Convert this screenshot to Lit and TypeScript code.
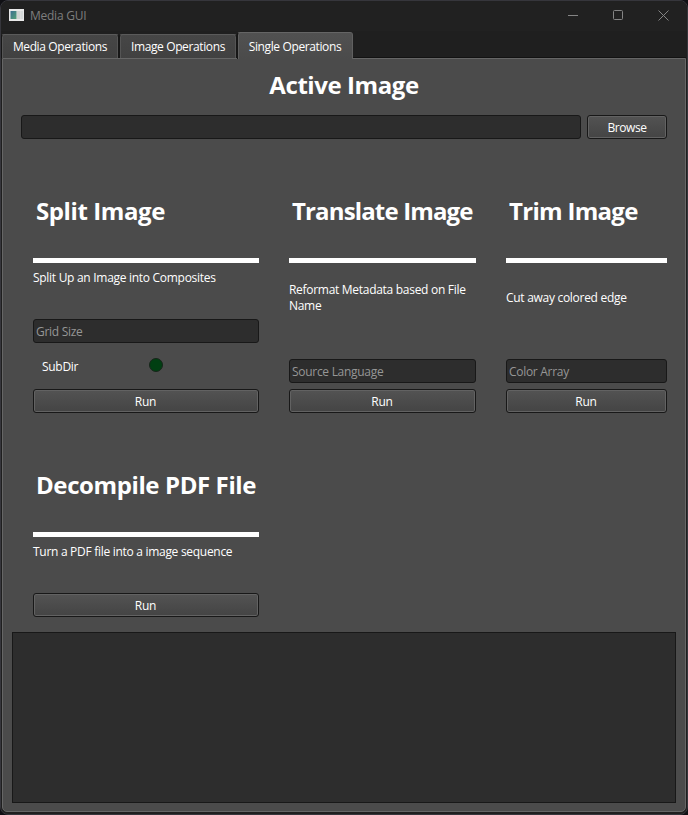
import { LitElement, html, css, nothing } from "lit";
import { customElement, property } from "lit/decorators.js";

@customElement("operation-card")
class OperationCard extends LitElement {
  @property() heading = "";
  @property() description = "";
  @property() field = "";
  @property() toggle = "";

  static styles = css`
    :host { display: flex; flex-direction: column; min-width: 0; }
    * { box-sizing: border-box; }
    h2 {
      margin: 0; padding-left: 3px; height: 92px;
      font: 700 24px/89px "Open Sans", "Noto Sans", sans-serif;
      letter-spacing: var(--heading-spacing, -0.4px); white-space: nowrap;
    }
    .rule { height: 5px; background: #fff; flex: none; }
    .description { flex: 1; display: flex; align-items: center; line-height: 16px; min-height: 0; padding-bottom: 26px; }
    .field {
      height: 24px; flex: none; margin-bottom: 6px; padding-left: 2px;
      border: 1px solid #181818; border-radius: 3px; background: #2d2d2d;
      color: #969696; line-height: 23px;
    }
    .toggle { height: 46px; flex: none; display: flex; padding-left: 9px; line-height: 47px; }
    .toggle span { width: 107px; }
    .led { width: 14px; height: 14px; margin-top: 15px; border-radius: 50%; background: #003f12; border: 1px solid #17251a; }
    .button {
      height: 24px; flex: none; border: 1px solid #181818; border-radius: 3px;
      background: linear-gradient(#535353, #444); box-shadow: inset 0 0 0 1px #626262;
      text-align: center; line-height: 23px; padding-right: 1px;
    }
    .with-toggle { margin-bottom: 0; }
  `;

  render() {
    return html`
      <h2>${this.heading}</h2>
      <div class="rule"></div>
      <div class="description"><span>${this.description}</span></div>
      ${this.field ? html`<div class="field ${this.toggle ? "with-toggle" : ""}">${this.field}</div>` : nothing}
      ${this.toggle ? html`<div class="toggle"><span>${this.toggle}</span><i class="led"></i></div>` : nothing}
      <div class="button">Run</div>
    `;
  }
}

@customElement("app-root")
class AppRoot extends LitElement {
  static styles = css`
    :host {
      display: block; width: 688px; height: 815px; background: #101014; color: #fff;
      font: 12px/16px "Open Sans", "Noto Sans", sans-serif; letter-spacing: -0.29px; overflow: hidden;
    }
    * { box-sizing: border-box; }
    .window {
      height: 815px; display: flex; flex-direction: column; padding: 0 1px 2px;
      border: 1px solid #36363c; border-radius: 8px; background: #1f1f1f;
    }
    .titlebar { height: 30px; flex: none; display: flex; align-items: center; background: #212121; margin: 0 -1px; padding-left: 8px; border-radius: 7px 7px 0 0; color: #7e7e7e; }
    .titlebar .icon { width: 15px; height: 12px; margin: -2px 6px 0 0; }
    .titlebar .name { flex: 1; letter-spacing: -0.25px; }
    .controls { display: flex; gap: 34px; padding: 0 18px 1px 0; }
    .controls svg { width: 11px; height: 11px; fill: none; stroke: #858585; }
    .tabs { height: 28px; flex: none; display: flex; align-items: flex-end; margin-left: -1px; position: relative; z-index: 1; }
    .tab {
      width: 118px; height: 24px; margin-bottom: 1px; text-align: center; line-height: 24px; letter-spacing: -0.38px;
      background: linear-gradient(#464646, #414141); border: 1px solid #171717; border-top-color: #5a5a5a; border-bottom: 0;
      box-shadow: inset 1px 0 #555, inset -1px 0 #555; border-radius: 3px 3px 0 0;
    }
    .tab:first-child { width: 118px; }
    .tab.active { width: 116px; height: 27px; margin-bottom: 0; line-height: 27px; background: linear-gradient(#515151, #4b4b4b); border-top-color: #656565; border-right-color: #606060; box-shadow: inset 1px 0 #606060; }
    .pane {
      flex: 1; min-height: 0; display: flex; flex-direction: column; margin-top: -1px;
      border: 1px solid #666; border-radius: 0 0 5px 5px; box-shadow: 0 -1px #121212; background: #4b4b4b; padding: 0 9px 8px;
    }
    h1 { margin: 0; height: 56px; text-align: center; font: 700 24px/52px "Open Sans", "Noto Sans", sans-serif; letter-spacing: -0.43px; }
    .picker { display: flex; gap: 6px; height: 24px; flex: none; margin: 0 9px; }
    .path { flex: 1; border: 1px solid #181818; border-radius: 3px; background: #2d2d2d; }
    .browse {
      width: 80px; border: 1px solid #181818; border-radius: 3px; text-align: center; line-height: 23px; letter-spacing: -0.45px;
      background: linear-gradient(#535353, #444); box-shadow: inset 0 0 0 1px #626262;
    }
    .cards {
      display: grid; grid-template-columns: 226px 187px 161px; grid-template-rows: 247px 177px;
      gap: 27px 30px; margin: 27px 0 0 21px;
    }
    .translate { --heading-spacing: -0.85px; }
    .trim { --heading-spacing: -0.7px; }
    .log { flex: 1; margin-top: 15px; border: 1px solid #181818; background: #2d2d2d; }
  `;

  render() {
    return html`
      <div class="window">
        <div class="titlebar">
          <svg class="icon" viewBox="0 0 15 12">
            <defs><linearGradient id="screen" x2="1" y2="1"><stop stop-color="#3c6f91" /><stop offset="1" stop-color="#55a077" /></linearGradient></defs>
            <rect width="15" height="12" fill="#e9e9e9" />
            <rect x="1.5" y="2" width="6" height="8" fill="url(#screen)" />
            <rect x="8" y="2" width="3.5" height="8" fill="#d1d3d3" />
            <rect x="12.5" y="2" width="1" height="8" fill="#c4cccc" />
          </svg>
          <span class="name">Media GUI</span>
          <div class="controls">
            <svg viewBox="0 0 11 11"><path d="M0 5.5h10" /></svg>
            <svg viewBox="0 0 11 11"><rect x=".5" y=".5" width="9" height="9" rx="1" /></svg>
            <svg viewBox="0 0 11 11"><path d="M.5.5l10 10M10.5.5l-10 10" /></svg>
          </div>
        </div>
        <div class="tabs">
          <div class="tab">Media Operations</div>
          <div class="tab">Image Operations</div>
          <div class="tab active">Single Operations</div>
        </div>
        <div class="pane">
          <h1>Active Image</h1>
          <div class="picker"><div class="path"></div><div class="browse">Browse</div></div>
          <div class="cards">
            <operation-card heading="Split Image" description="Split Up an Image into Composites" field="Grid Size" toggle="SubDir"></operation-card>
            <operation-card class="translate" heading="Translate Image" description="Reformat Metadata based on File Name" field="Source Language"></operation-card>
            <operation-card class="trim" heading="Trim Image" description="Cut away colored edge" field="Color Array"></operation-card>
            <operation-card heading="Decompile PDF File" description="Turn a PDF file into a image sequence"></operation-card>
          </div>
          <div class="log"></div>
        </div>
      </div>
    `;
  }
}
